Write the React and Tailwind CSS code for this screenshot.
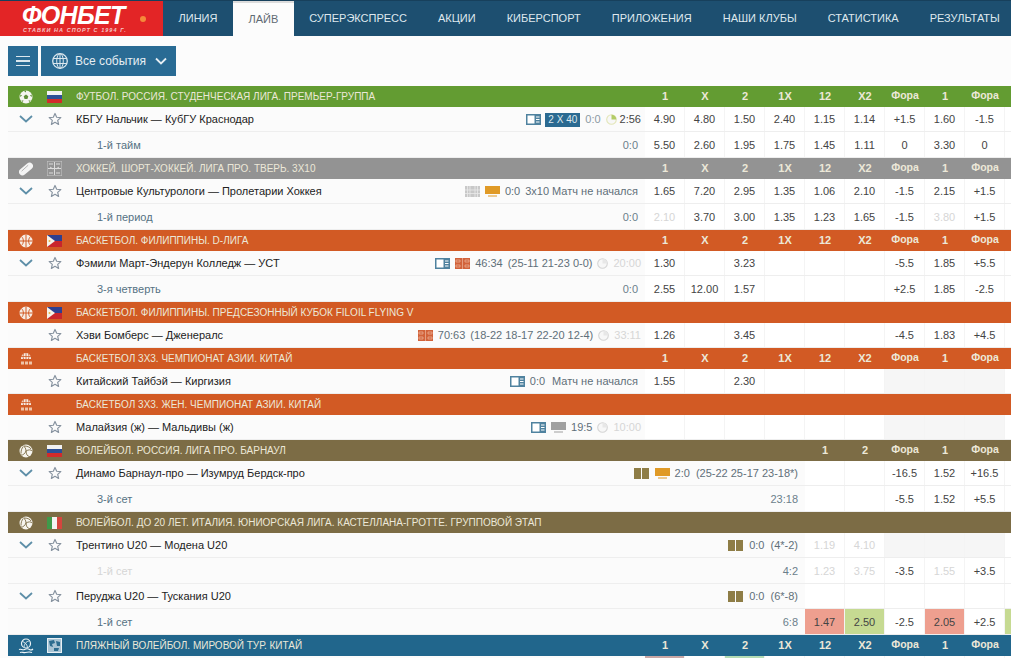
import React from "react";

const Sans = '"Liberation Sans", Arial, sans-serif';
const themes = {
  green: "bg-[#639c32]",
  grey: "bg-[#939393]",
  orange: "bg-[#d25a24]",
  olive: "bg-[#7c6c45]",
  blue: "bg-[#21668c]",
};
const L9 = ["1", "X", "2", "1X", "12", "X2", "Фора", "1", "Фора"];

function Ball({ kind }) {
  if (kind === "football")
    return (
      <svg width="14" height="14" viewBox="0 0 14 14">
        <circle cx="7" cy="7" r="6.5" fill="#f4f4f0" />
        <path d="M7 4.6 9.3 6.3 8.4 9H5.6L4.7 6.3Z" fill="#5f8f38" />
        <path d="M7 .6V2.4L5 1ZM12.6 4.4 11 5.6 12.9 7ZM1.4 4.4 3 5.6 1.1 7ZM3.6 12 4.6 10.4 2.4 10.4ZM10.4 12 9.4 10.4 11.6 10.4Z" fill="#5f8f38" />
      </svg>
    );
  if (kind === "hockey")
    return (
      <svg width="14" height="14" viewBox="0 0 14 14">
        <rect x="-1" y="3.5" width="16" height="7" rx="3.5" fill="#f4f4f4" transform="rotate(-40 7 7)" />
        <path d="M2.6 9.2 9.2 3.2" stroke="#b5b5b5" strokeWidth="1" />
      </svg>
    );
  if (kind === "basket")
    return (
      <svg width="14" height="14" viewBox="0 0 14 14">
        <circle cx="7" cy="7" r="6.5" fill="#f6ece4" />
        <path d="M7 .5V13.5M.5 7H13.5M2.5 2.5C5 5 5 9 2.5 11.5M11.5 2.5C9 5 9 9 11.5 11.5" stroke="#d25a24" strokeWidth="1" fill="none" />
      </svg>
    );
  if (kind === "basket3")
    return (
      <svg width="14" height="14" viewBox="0 0 14 14">
        <path d="M2 7C2 3.5 4 1 7 1s5 2.500 5 6Z" fill="#f6ece4" />
        <path d="M7 1V7M2 4.500H12M4.500 1.800C4 4 4 5 4.500 7M9.500 1.800C10 4 10 5 9.500 7" stroke="#d25a24" strokeWidth=".8" fill="none" />
        <path d="M2 9.500H5V12.500H2ZM6 9.500H9V12.500H6ZM10 9.500H13V12.500H10Z" fill="#eec4a8" />
      </svg>
    );
  if (kind === "volley")
    return (
      <svg width="14" height="14" viewBox="0 0 14 14">
        <circle cx="7" cy="7" r="6.5" fill="#f6f4ee" />
        <path d="M7 7C7 4 5.500 2 3 1.500M7 7C9.500 5.500 12 5.500 13.300 7M7 7C6 9.500 4 11.500 1.800 11M5 2C8 2 11 3 12 5M2 9.500C2 6 3 4 4 3M10.500 12.500C8.500 12.500 7 10 7 7" stroke="#7c6c45" strokeWidth=".9" fill="none" />
      </svg>
    );
  return (
    <svg width="16" height="16" viewBox="0 0 16 16">
      <circle cx="8" cy="5.500" r="4.500" fill="none" stroke="#eef4f7" strokeWidth="1.200" />
      <path d="M4.500 3.500C7 4.500 9 6 9.500 9.500M11.500 3C9 3 6.500 5 6 9" stroke="#eef4f7" strokeWidth=".9" fill="none" />
      <path d="M1 11.500C3 10.500 4.500 12.500 6.500 11.500S10 10.500 11.500 11.500 14 12 15 11M2 14.500C4 13.500 5.500 15 7.500 14.500S11.500 13.500 14 14.500" stroke="#eef4f7" strokeWidth="1.100" fill="none" />
    </svg>
  );
}

function Flag({ kind }) {
  if (kind === "ru")
    return (
      <svg width="15" height="12" viewBox="0 0 15 12" className="block">
        <rect width="15" height="4" fill="#f2f2f2" />
        <rect y="4" width="15" height="4" fill="#2c4f96" />
        <rect y="8" width="15" height="4" fill="#d22b2b" />
      </svg>
    );
  if (kind === "ph")
    return (
      <svg width="15" height="12" viewBox="0 0 15 12" className="block">
        <rect width="15" height="6" fill="#2f3f8f" />
        <rect y="6" width="15" height="6" fill="#c9252c" />
        <path d="M0 0 8 6 0 12Z" fill="#f5f2ea" />
        <circle cx="2.500" cy="6" r="1" fill="#e9b949" />
      </svg>
    );
  if (kind === "it")
    return (
      <svg width="15" height="12" viewBox="0 0 15 12" className="block">
        <rect width="5" height="12" fill="#3f9a4a" />
        <rect x="5" width="5" height="12" fill="#f3f3f3" />
        <rect x="10" width="5" height="12" fill="#d5453e" />
      </svg>
    );
  if (kind === "rink")
    return (
      <svg width="15" height="15" viewBox="0 0 15 15" className="block">
        <rect width="15" height="15" fill="none" stroke="#c9c9c9" strokeWidth="1" />
        <path d="M2 3H6M9 3H13M3 6 6 8M12 6 9 8M2 12H6M9 12H13M7.500 1V14M1 7.500H14" stroke="#dcdcdc" strokeWidth="1" />
      </svg>
    );
  if (kind === "world")
    return (
      <svg width="15" height="15" viewBox="0 0 15 15" className="block">
        <rect x=".5" y=".5" width="14" height="14" fill="#a9c4d4" stroke="#e8f0f4" />
        <path d="M2 3 7 2 8 5 5 6 6 9 3 8ZM9 3 13 4 13 8 10 8ZM7 10 12 10 11 13 7 13Z" fill="#2c6c8f" />
      </svg>
    );
  return null;
}

function Book() {
  return (
    <svg width="15" height="11" viewBox="0 0 15 11" className="flex-none">
      <rect width="15" height="11" fill="#4f829f" />
      <rect x="1.500" y="1.500" width="7" height="8" fill="#fff" />
      <path d="M10 3H13.500M10 5.500H13.500M10 8H13.500" stroke="#fff" strokeWidth="1" />
    </svg>
  );
}
function Tv({ c }) {
  return (
    <svg width="15" height="11" viewBox="0 0 15 11" className="flex-none">
      <rect width="15" height="8" fill={c} />
      <rect x="3" y="9.500" width="9" height="1" fill={c} />
    </svg>
  );
}
function Court() {
  return (
    <svg width="15" height="11" viewBox="0 0 15 11" className="flex-none">
      <rect width="15" height="11" fill="#d2623a" />
      <path d="M7.500 0V11M1 2H5V4H1ZM1 7H5V9H1ZM10 2H14V4H10ZM10 7H14V9H10Z" stroke="#eeb79f" strokeWidth=".7" fill="none" />
    </svg>
  );
}
function Rink() {
  return (
    <svg width="15" height="11" viewBox="0 0 15 11" className="flex-none">
      <rect width="15" height="11" fill="#c8c8c8" />
      <path d="M5 0V11M10 0V11M0 4H15M0 7.500H15M2.500 0V11M12.500 0V11" stroke="#eaeaea" strokeWidth=".8" />
    </svg>
  );
}
function Duo() {
  return (
    <span className="mr-px flex flex-none gap-px">
      <span className="h-[11px] w-[7px] bg-[#8e7d46]" />
      <span className="h-[11px] w-[7px] bg-[#8e7d46]" />
    </span>
  );
}
function Pie({ c = "#d5d5d5", w = "#e7e7e7" }) {
  return (
    <svg width="11" height="11" viewBox="0 0 11 11" className="flex-none">
      <circle cx="5.500" cy="5.500" r="4.800" fill="#f7f7f7" stroke={c} strokeWidth="1.100" />
      <path d="M5.500 5.500V.7A4.800 4.800 0 0 1 10.300 5.500Z" fill={w} />
    </svg>
  );
}

function Cells({ values }) {
  return (
    <div className="flex h-full flex-none">
      {values.map((v, i) => {
        const o = v && typeof v === "object" ? v : { t: v };
        return (
          <div
            key={i}
            className={`flex h-full w-10 flex-none items-center justify-center border-r border-[#f4f4f4] pt-px text-[11px] ${
              o.g
                ? "bg-[#f6f6f6]"
                : o.red
                ? "bg-[#ee9f8f]"
                : o.lime
                ? "bg-[#c6da92]"
                : o.dimRed
                ? "bg-[#c9a7a5]"
                : o.dimGreen
                ? "bg-[#b4dcb4]"
                : "bg-white"
            } ${o.f ? "text-[#d6d6d6]" : "text-[#444]"}`}
          >
            {o.t}
          </div>
        );
      })}
    </div>
  );
}

const E = { t: "", g: true };
const fade = (t) => ({ t, f: true });

function Header({ theme, ball, flag, title, labels = [] }) {
  return (
    <div className={`flex h-[21px] items-center text-[#ece8d8] ${themes[theme]}`}>
      <div className="flex w-[39px] flex-none justify-center pr-[3px]">
        <Ball kind={ball} />
      </div>
      <div className="w-[29px] flex-none">
        <Flag kind={flag} />
      </div>
      <div className="min-w-0 flex-1 truncate text-[10px] uppercase">{title}</div>
      <div className="flex flex-none pr-[6px]">
        {labels.map((l, i) => (
          <div
            key={i}
            className={`w-10 flex-none text-center font-bold ${l === "Фора" ? "text-[10.500px]" : "text-[11px]"}`}
          >
            {l}
          </div>
        ))}
      </div>
    </div>
  );
}

function Row({ open = true, star = true, name, status, values, timed, tail = "bg-white" }) {
  return (
    <div className="flex h-[25px] items-center border-b border-[#eeeeee] bg-[#fbfbfb]">
      <div className="flex w-[39px] flex-none justify-center pr-[3px]">
        {open && (
          <svg width="14" height="8" viewBox="0 0 14 8">
            <path d="M1 1 7 6.500 13 1" fill="none" stroke="#5e8fa8" strokeWidth="1.800" />
          </svg>
        )}
      </div>
      <div className="w-[29px] flex-none pl-px">
        {star && (
          <svg width="14" height="14" viewBox="0 0 24 24" className="block">
            <path
              d="M12 2.500 14.900 9 22 9.700 16.600 14.400 18.200 21.400 12 17.700 5.800 21.400 7.400 14.400 2 9.700 9.100 9Z"
              fill="none"
              stroke="#8793a0"
              strokeWidth="2"
              strokeLinejoin="round"
            />
          </svg>
        )}
      </div>
      <div className="min-w-0 flex-none pt-px text-[11px] text-[#222]">{name}</div>
      <div
        className={`flex min-w-0 flex-1 items-center justify-end gap-[5px] whitespace-pre pt-px text-[11px] text-[#5f6f79] ${
          timed ? "pr-[4px]" : "pr-[7px]"
        }`}
      >
        {status}
      </div>
      <Cells values={values} />
      <div className={`h-full w-[6px] flex-none ${tail}`} />
    </div>
  );
}

function Sub({ name, score, values, fadeName, tail = "bg-white" }) {
  return (
    <div className="flex h-[26px] items-center border-b border-[#eeeeee] bg-[#fbfbfb]">
      <div className={`flex-none pl-[89px] pt-px text-[11px] ${fadeName ? "text-[#d6d6d6]" : "text-[#557283]"}`}>{name}</div>
      <div className="flex-1 pr-[7px] pt-px text-right text-[11px] text-[#6b7f8b]">{score}</div>
      <Cells values={values} />
      <div className={`h-full w-[6px] flex-none ${tail}`} />
    </div>
  );
}

const Light = ({ children }) => <span className="text-[#d6d6d6]">{children}</span>;

const nav = ["ЛИНИЯ", "ЛАЙВ", "СУПЕРЭКСПРЕСС", "АКЦИИ", "КИБЕРСПОРТ", "ПРИЛОЖЕНИЯ", "НАШИ КЛУБЫ", "СТАТИСТИКА", "РЕЗУЛЬТАТЫ"];

export default function App() {
  return (
    <div className="h-[658px] w-[1011px] overflow-hidden bg-[#fcfcfc]" style={{ fontFamily: Sans }}>
      <header className="flex h-[36px] border-t border-[#17405c] bg-[#1d4f70]">
        <div className="relative h-full w-[163px] flex-none bg-[#e32526] text-white">
          <div className="pl-[22px] pt-[2px] text-[25px] font-bold italic leading-[24px] tracking-[-0.700px]">ФОНБЕТ</div>
          <div className="pl-[23px] text-[5.500px] font-bold italic leading-[6px] tracking-[1.050px] text-[#f6c8c8]">СТАВКИ НА СПОРТ С 1994 Г.</div>
          <span className="absolute left-[140px] top-[15px] h-[6px] w-[6px] rounded-full bg-[#f5893a]" />
        </div>
        <nav className="flex h-full flex-1 whitespace-nowrap text-[11px]">
          {nav.map((n) => (
            <div
              key={n}
              className={`flex h-full flex-none items-center px-[15.500px] ${
                n === "ЛАЙВ" ? "border-t-2 border-[#dcdcdc] bg-[#fcfcfc] text-[#5f6b73]" : "text-[#dfe8ee]"
              }`}
            >
              {n}
            </div>
          ))}
        </nav>
      </header>

      <div className="flex gap-[3px] pl-2 pt-[10px]">
        <button className="flex h-[30px] w-[30px] flex-none flex-col items-center justify-center gap-[3px] bg-[#296b94]">
          <span className="h-[1.500px] w-[14px] bg-[#dbe7ee]" />
          <span className="h-[1.500px] w-[14px] bg-[#dbe7ee]" />
          <span className="h-[1.500px] w-[14px] bg-[#dbe7ee]" />
        </button>
        <button className="flex h-[30px] w-[135px] flex-none items-center bg-[#296b94] pl-[11px] text-[12px] text-[#e6eef3]">
          <svg width="16" height="16" viewBox="0 0 16 16" className="flex-none">
            <circle cx="8" cy="8" r="7.300" fill="none" stroke="#dbe7ee" strokeWidth="1.300" />
            <ellipse cx="8" cy="8" rx="3.300" ry="7.300" fill="none" stroke="#dbe7ee" strokeWidth="1" />
            <path d="M1 5.500H15M1 10.500H15M8 1V15" stroke="#dbe7ee" strokeWidth="1" />
          </svg>
          <span className="ml-[7px]">Все события</span>
          <svg width="12" height="8" viewBox="0 0 12 8" className="ml-[9px] flex-none">
            <path d="M1 1.500 6 6.500 11 1.500" fill="none" stroke="#e6eef3" strokeWidth="1.800" />
          </svg>
        </button>
      </div>

      <main className="ml-2 mt-[10px]">
        <Header theme="green" ball="football" flag="ru" title="Футбол. Россия. Студенческая лига. Премьер-группа" labels={L9} />
        <Row
          timed
          name="КБГУ Нальчик — КубГУ Краснодар"
          status={
            <>
              <Book />
              <span className="ml-[-1px] bg-[#2b6a91] px-[3px] py-px text-[10px] leading-[12px] text-[#dfe9ef]">2 X 40</span>
              <span className="text-[#8c9aa3]">0:0</span>
              <span className="flex items-center gap-[3px] text-[#444]">
                <Pie c="#e3e6b8" w="#b3cc66" />
                2:56
              </span>
            </>
          }
          values={["4.90", "4.80", "1.50", "2.40", "1.15", "1.14", "+1.5", "1.60", "-1.5"]}
        />
        <Sub name="1-й тайм" score="0:0" values={["5.50", "2.60", "1.95", "1.75", "1.45", "1.11", "0", "3.30", "0"]} />

        <Header theme="grey" ball="hockey" flag="rink" title="Хоккей. Шорт-хоккей. Лига Про. Тверь. 3х10" labels={L9} />
        <Row
          name="Центровые Культурологи — Пролетарии Хоккея"
          status={
            <>
              <Rink />
              <Tv c="#e09a26" />
              <span>0:0</span>
              <span>3х10 Матч не начался</span>
            </>
          }
          values={["1.65", "7.20", "2.95", "1.35", "1.06", "2.10", "-1.5", "2.15", "+1.5"]}
        />
        <Sub name="1-й период" score="0:0" values={[fade("2.10"), "3.70", "3.00", "1.35", "1.23", "1.65", "-1.5", fade("3.80"), "+1.5"]} />

        <Header theme="orange" ball="basket" flag="ph" title="Баскетбол. Филиппины. D-Лига" labels={L9} />
        <Row
          timed
          name="Фэмили Март-Эндерун Колледж — УСТ"
          status={
            <>
              <Book />
              <Court />
              <span>46:34</span>
              <span>(25-11 21-23 0-0)</span>
              <Pie />
              <Light>20:00</Light>
            </>
          }
          values={["1.30", "", "3.23", "", "", "", "-5.5", "1.85", "+5.5"]}
        />
        <Sub name="3-я четверть" score="0:0" values={["2.55", "12.00", "1.57", "", "", "", "+2.5", "1.85", "-2.5"]} />

        <Header theme="orange" ball="basket" flag="ph" title="Баскетбол. Филиппины. Предсезонный кубок FILOIL FLYING V" />
        <Row
          timed
          open={false}
          name="Хэви Бомберс — Дженералс"
          status={
            <>
              <Court />
              <span>70:63</span>
              <span>(18-22 18-17 22-20 12-4)</span>
              <Pie />
              <Light>33:11</Light>
            </>
          }
          values={["1.26", "", "3.45", "", "", "", "-4.5", "1.83", "+4.5"]}
        />

        <Header theme="orange" ball="basket3" title="Баскетбол 3х3. Чемпионат Азии. Китай" labels={L9} />
        <Row
          open={false}
          name="Китайский Тайбэй — Киргизия"
          status={
            <>
              <Book />
              <span>0:0</span>
              <span className="ml-[2px]">Матч не начался</span>
            </>
          }
          values={["1.55", "", "2.30", "", "", "", E, E, E]}
        />

        <Header theme="orange" ball="basket3" title="Баскетбол 3х3. Жен. Чемпионат Азии. Китай" />
        <Row
          timed
          open={false}
          name="Малайзия (ж) — Мальдивы (ж)"
          status={
            <>
              <Book />
              <Tv c="#a0a0a0" />
              <span>19:5</span>
              <Pie />
              <Light>10:00</Light>
            </>
          }
          values={["", "", "", "", "", "", E, E, E]}
        />

        <Header theme="olive" ball="volley" flag="ru" title="Волейбол. Россия. Лига Про. Барнаул" labels={["1", "2", "Фора", "1", "Фора"]} />
        <Row
          name="Динамо Барнаул-про — Изумруд Бердск-про"
          status={
            <>
              <Duo />
              <Tv c="#e09a26" />
              <span>2:0</span>
              <span className="ml-px">(25-22 25-17 23-18*)</span>
            </>
          }
          values={["", "", "-16.5", "1.52", "+16.5"]}
        />
        <Sub name="3-й сет" score="23:18" values={["", "", "-5.5", "1.52", "+5.5"]} />

        <Header theme="olive" ball="volley" flag="it" title="Волейбол. До 20 лет. Италия. Юниорская лига. Кастеллана-Гротте. Групповой этап" />
        <Row
          name="Трентино U20 — Модена U20"
          status={
            <>
              <Duo />
              <span>0:0</span>
              <span className="ml-px">(4*-2)</span>
            </>
          }
          values={[fade("1.19"), fade("4.10"), E, E, E]}
        />
        <Sub name="1-й сет" fadeName score="4:2" values={[fade("1.23"), fade("3.75"), "-3.5", fade("1.55"), "+3.5"]} />
        <Row
          name="Перуджа U20 — Тускания U20"
          status={
            <>
              <Duo />
              <span>0:0</span>
              <span className="ml-px">(6*-8)</span>
            </>
          }
          values={["", "", "", "", ""]}
        />
        <Sub
          name="1-й сет"
          score="6:8"
          values={[{ t: "1.47", red: true }, { t: "2.50", lime: true }, "-2.5", { t: "2.05", red: true }, "+2.5"]}
          tail="bg-[#c6da92]"
        />

        <Header theme="blue" ball="beach" flag="world" title="Пляжный волейбол. Мировой тур. Китай" labels={L9} />
        <Row
          open={false}
          star={false}
          name=""
          status={null}
          values={[{ t: "", dimRed: true }, "", { t: "", dimGreen: true }, "", "", "", "", "", ""]}
        />
      </main>
    </div>
  );
}
